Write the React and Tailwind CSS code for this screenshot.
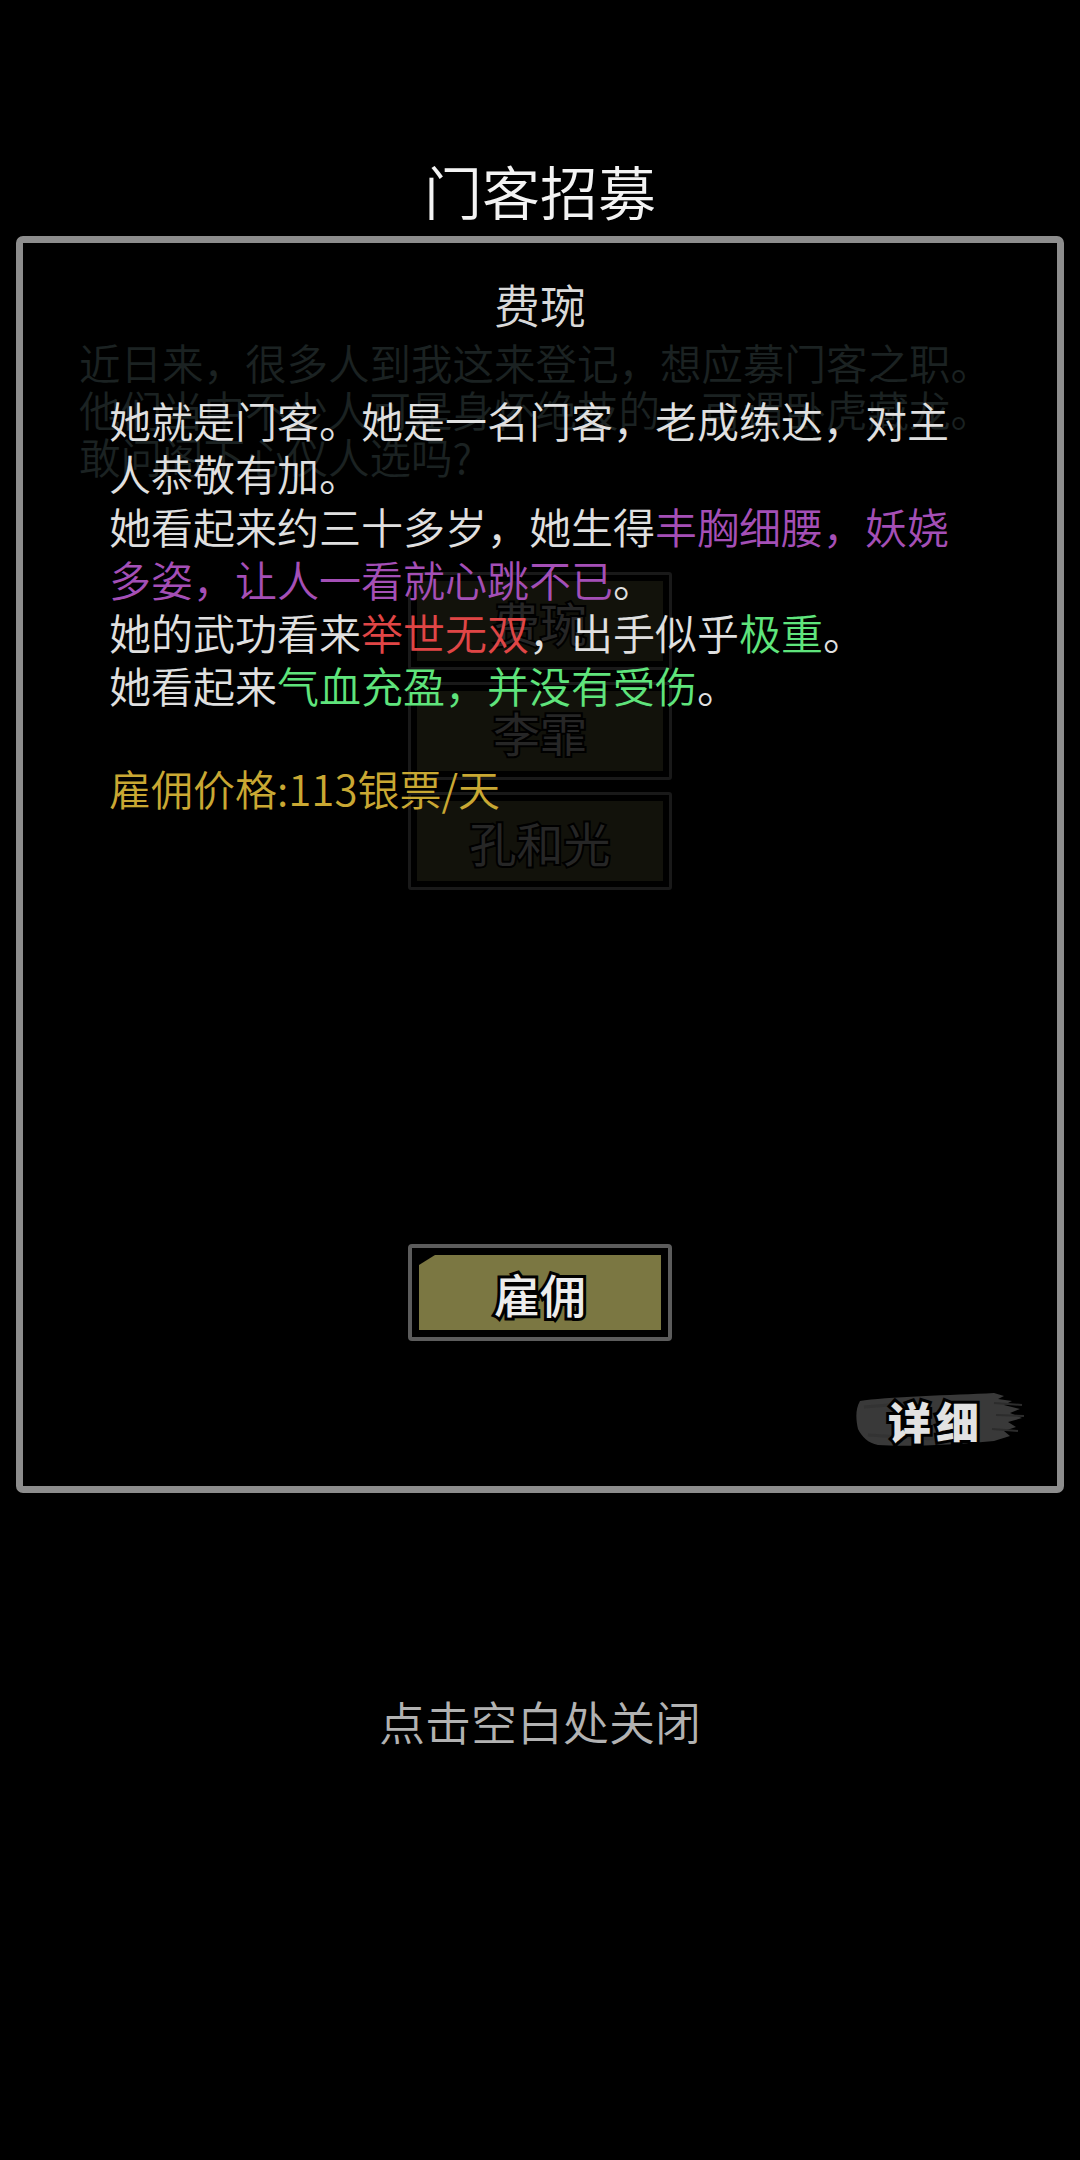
import React from "react";

const font = "font-['Noto_Sans_CJK_SC','Noto_Sans',sans-serif]";

const candidates = ["费琬", "李霏", "孔和光"];

// Dimmed recruitment list that sits underneath the detail card.
function BackdropList() {
  return (
    <div className="[grid-area:1/1] flex flex-col pt-[96px] px-[56px]">
      <p className="w-[920px] text-[41.5px] leading-[47px] font-[350] text-[#1b2222]">
        近日来，很多人到我这来登记，想应募门客之职。他们当中不少人可是身怀绝技的，可谓卧虎藏龙。敢问阁下心仪人选吗?
      </p>
      <div className="mt-[92px] flex flex-col items-center gap-[12px]">
        {candidates.map((name) => (
          <div
            key={name}
            className="w-[264px] h-[98px] border-[3px] border-[#191919] rounded-[3px] p-[6px]"
          >
            <div className="w-full h-full bg-[#12120b] flex items-center justify-center text-[47px] leading-none text-[#262626] [-webkit-text-stroke:4px_#000] [paint-order:stroke_fill]">
              {name}
            </div>
          </div>
        ))}
      </div>
    </div>
  );
}

function HireButton() {
  return (
    <button className="self-center w-[264px] h-[97px] border-4 border-[#5c5c5c] rounded-[4px] p-[7px] bg-black">
      <div className="w-full h-full bg-[#7b7742] [clip-path:polygon(16px_0,100%_0,100%_100%,0_100%,0_10px)] flex items-center justify-center">
        <span className="text-[46px] leading-none font-medium text-[#ececec] [-webkit-text-stroke:6px_#000] [paint-order:stroke_fill]">
          雇佣
        </span>
      </div>
    </button>
  );
}

function DetailButton() {
  return (
    <button className="self-end mr-[33px] w-[170px] h-[58px] grid">
      <svg
        className="[grid-area:1/1] w-full h-full"
        viewBox="0 0 170 58"
        preserveAspectRatio="none"
      >
        <path
          d="M6 10 C30 6 100 4 140 2 L150 5 L144 8 L158 10 L150 14 L166 18 L156 22 L168 27 L154 31 L162 36 L150 40 L156 45 L140 50 C100 54 50 56 24 54 C14 52 8 46 4 38 C2 30 1 18 6 10 Z"
          fill="#393939"
        />
        <path d="M140 12 L168 14 M142 24 L170 25 M138 38 L164 40" stroke="#2c2c2c" strokeWidth="2" />
        <path d="M10 16 L60 12 M14 44 L80 48" stroke="#333" strokeWidth="3" />
      </svg>
      <span className="[grid-area:1/1] self-center justify-self-center ml-[-6px] text-[43px] leading-none font-black tracking-[5px] text-[#e2e2e2] [-webkit-text-stroke:6px_#000] [paint-order:stroke_fill]">
        详细
      </span>
    </button>
  );
}

export default function App() {
  return (
    <div className={`${font} min-h-[2160px] w-full bg-black flex flex-col items-center`}>
      <h1 className="mt-[150px] h-[80px] leading-[80px] text-[58px] font-[350] text-[#f3f3f3]">门客招募</h1>

      <section className="mt-[6px] w-[1048px] h-[1257px] border-[7px] border-[#8d8d8d] rounded-[7px] bg-black grid">
        <BackdropList />

        <div className="[grid-area:1/1] flex flex-col">
          <h2 className="mt-[30px] h-[60px] leading-[60px] text-[46px] font-[350] text-center text-[#d9d9d9]">费琬</h2>

          <div className="mt-[60px] ml-[86px] w-[860px] text-[42px] leading-[53px] font-[350] text-[#e0e0e0]">
            <p>她就是门客。她是一名门客，老成练达，对主人恭敬有加。</p>
            <p>
              她看起来约三十多岁，她生得
              <span className="text-[#a44fb6]">丰胸细腰，妖娆多姿，让人一看就心跳不已</span>。
            </p>
            <p>
              她的武功看来<span className="text-[#e04646]">举世无双</span>，出手似乎
              <span className="text-[#5fe47c]">极重</span>。
            </p>
            <p>
              她看起来<span className="text-[#5fe47c]">气血充盈，并没有受伤</span>。
            </p>
          </div>

          <p className="mt-[50px] ml-[86px] text-[42px] leading-[53px] font-[350] text-[#c9a833]">雇佣价格:113银票/天</p>

          <div className="mt-[430px] flex flex-col">
            <HireButton />
          </div>

          <div className="mt-[50px] flex flex-col">
            <DetailButton />
          </div>
        </div>
      </section>

      <p className="mt-[197px] leading-[60px] text-[46px] font-[350] text-[#b2b2b2]">点击空白处关闭</p>
    </div>
  );
}
